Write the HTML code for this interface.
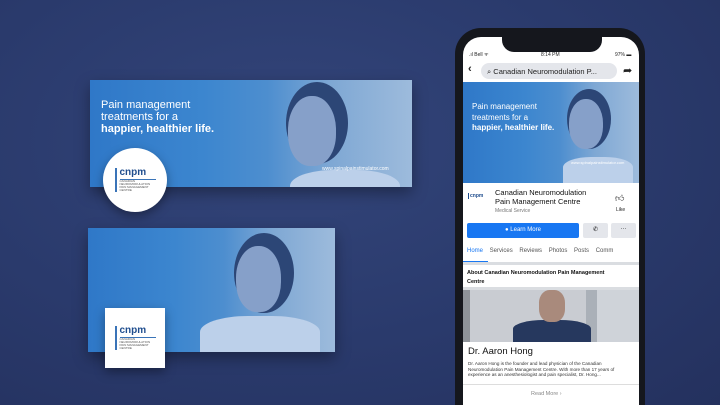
<!DOCTYPE html>
<html><head><style>
*{margin:0;padding:0;box-sizing:border-box}
html,body{width:720px;height:405px;overflow:hidden}
body{position:relative;font-family:"Liberation Sans",sans-serif;
background:radial-gradient(ellipse at 40% 35%,#33457a 0%,#2a3a6c 55%,#24315e 100%)}
.ban{position:absolute;overflow:hidden;box-shadow:0 6px 14px rgba(0,0,0,.35)}
.photo{position:absolute;inset:0;background:linear-gradient(90deg,#2f78c8 0%,#3c86cf 35%,#4d8ecf 55%,#7fa8d4 75%,#9dbbdc 100%)}
.hair{position:absolute;border-radius:50%;background:#2c4676}
.skin{position:absolute;border-radius:48% 48% 45% 45%;background:#86a0c9}
.shirt{position:absolute;border-radius:40% 40% 0 0;background:#bcd0ea}
.t{position:absolute;color:#fff;font-size:11px;line-height:12px}
.logo{position:absolute;background:#fff;display:flex;align-items:center;justify-content:center}
.lg{color:#1f4d8e;font-weight:bold;font-size:10px;border-left:2px solid #3a74b8;padding-left:3px;line-height:10px}
.lg small{display:block;font-size:3px;line-height:3px;color:#555;border-top:1px solid #3a74b8;margin-top:1px;width:36px;font-weight:normal}
.phone{position:absolute;left:455px;top:28px;width:190px;height:377px;background:#15171d;border-radius:26px 26px 0 0}
.scr{position:absolute;left:463px;top:37px;width:176px;height:368px;background:#fff;border-radius:18px 18px 0 0;overflow:hidden}
.notch{position:absolute;left:502px;top:36px;width:100px;height:16px;background:#15171d;border-radius:0 0 12px 12px}
.s{position:absolute;font-size:5px;color:#222}
</style></head><body>

<div class="ban" style="left:90px;top:80px;width:322px;height:107px">
 <div class="photo"></div>
 <div class="shirt" style="left:200px;top:90px;width:110px;height:40px"></div>
 <div class="hair" style="left:196px;top:2px;width:62px;height:82px"></div>
 <div class="skin" style="left:198px;top:16px;width:48px;height:70px"></div>
 <div class="t" style="left:11px;top:19px">Pain management<br>treatments for a<br><b>happier, healthier life.</b></div>
 <div class="t" style="left:232px;top:83px;font-size:5px">www.spinalpainstimulator.com</div>
</div>
<div class="logo" style="left:103px;top:148px;width:64px;height:64px;border-radius:50%;box-shadow:0 4px 10px rgba(0,0,0,.35)"><div class="lg">cnpm<small>CANADIAN NEUROMODULATION PAIN MANAGEMENT CENTRE</small></div></div>

<div class="ban" style="left:88px;top:228px;width:247px;height:124px">
 <div class="photo"></div>
 <div class="shirt" style="left:112px;top:88px;width:120px;height:40px"></div>
 <div class="hair" style="left:146px;top:5px;width:60px;height:80px"></div>
 <div class="skin" style="left:148px;top:18px;width:45px;height:66px"></div>
</div>
<div class="logo" style="left:105px;top:308px;width:60px;height:60px;box-shadow:0 4px 10px rgba(0,0,0,.35)"><div class="lg">cnpm<small>CANADIAN NEUROMODULATION PAIN MANAGEMENT CENTRE</small></div></div>

<div class="phone"></div>
<div class="scr">
 <div class="s" style="left:6px;top:15px">.ıl Bell ᯤ</div>
 <div class="s" style="left:78px;top:15px">8:14 PM</div>
 <div class="s" style="left:152px;top:15px">97% ▬</div>
 <div class="s" style="left:5px;top:26px;font-size:11px;font-weight:bold">‹</div>
 <div style="position:absolute;left:18px;top:26px;width:136px;height:16px;border-radius:8px;background:#e4e6eb;font-size:7.5px;color:#222;padding:4px 0 0 6px">⌕ Canadian Neuromodulation P...</div>
 <div class="s" style="left:160px;top:27px;font-size:11px">➦</div>
 <div style="position:absolute;left:0;top:45px;width:176px;height:101px" class="photo"></div>
 <div class="shirt" style="position:absolute;left:100px;top:120px;width:70px;height:26px"></div>
 <div class="hair" style="left:104px;top:52px;width:44px;height:60px"></div>
 <div class="skin" style="left:106px;top:62px;width:34px;height:50px"></div>
 <div class="t" style="left:9px;top:65px;font-size:8px;line-height:10.5px">Pain management<br>treatments for a<br><b>happier, healthier life.</b></div>
 <div class="t" style="left:108px;top:120px;font-size:4px">www.spinalpainstimulator.com</div>
 <div style="position:absolute;left:5px;top:156px;font-size:5px;color:#1f4d8e;font-weight:bold;border-left:1px solid #1f4d8e;padding-left:1px">cnpm</div>
 <div style="position:absolute;left:32px;top:151px;font-size:7.5px;line-height:9px;color:#111">Canadian Neuromodulation<br>Pain Management Centre</div>
 <div class="s" style="left:32px;top:171px;color:#777">Medical Service</div>
 <div class="s" style="left:152px;top:156px;font-size:9px">👍︎</div>
 <div class="s" style="left:153px;top:170px">Like</div>
 <div style="position:absolute;left:4px;top:186px;width:112px;height:15px;background:#1877f2;border-radius:2px;color:#fff;font-size:6px;text-align:center;line-height:15px">● Learn More</div>
 <div style="position:absolute;left:120px;top:186px;width:25px;height:15px;background:#e4e6eb;border-radius:2px;font-size:6px;text-align:center;line-height:15px">✆</div>
 <div style="position:absolute;left:148px;top:186px;width:25px;height:15px;background:#e4e6eb;border-radius:2px;font-size:6px;text-align:center;line-height:13px">···</div>
 <div style="position:absolute;left:4px;top:211px;font-size:6px;color:#555;white-space:nowrap"><span style="color:#1877f2">Home</span>&nbsp;&nbsp;&nbsp;&nbsp;Services&nbsp;&nbsp;&nbsp;&nbsp;Reviews&nbsp;&nbsp;&nbsp;&nbsp;Photos&nbsp;&nbsp;&nbsp;&nbsp;Posts&nbsp;&nbsp;&nbsp;&nbsp;Comm</div>
 <div style="position:absolute;left:0;top:224px;width:25px;height:1.5px;background:#1877f2"></div>
 <div style="position:absolute;left:0;top:225px;width:176px;height:3px;background:#dadde1"></div>
 <div style="position:absolute;left:4px;top:232px;font-size:5.5px;line-height:9px;color:#111;font-weight:bold">About Canadian Neuromodulation Pain Management<br>Centre</div>
 <div style="position:absolute;left:0;top:250px;width:176px;height:3px;background:#dadde1"></div>
 <div style="position:absolute;left:0;top:253px;width:176px;height:52px;background:linear-gradient(90deg,#8e9399 0 4%,#c9ccd2 4% 70%,#aab0b8 70% 76%,#cfd3d9 76%)"></div>
 <div style="position:absolute;left:50px;top:283px;width:78px;height:22px;background:#26385e;border-radius:40% 40% 0 0"></div>
 <div style="position:absolute;left:76px;top:253px;width:26px;height:32px;background:#a98a7c;border-radius:40%"></div>
 <div style="position:absolute;left:5px;top:309px;font-size:9.5px;color:#111">Dr. Aaron Hong</div>
 <div style="position:absolute;left:5px;top:324px;font-size:4.6px;line-height:5.7px;color:#333;width:166px">Dr. Aaron Hong is the founder and lead physician of the Canadian Neuromodulation Pain Management Centre. With more than 17 years of experience as an anesthesiologist and pain specialist, Dr. Hong...</div>
 <div style="position:absolute;left:0;top:347px;width:176px;height:1px;background:#ddd"></div>
 <div class="s" style="left:68px;top:354px;color:#888;font-size:5.5px">Read More ›</div>
</div>
<div class="notch"></div>
</body></html>
